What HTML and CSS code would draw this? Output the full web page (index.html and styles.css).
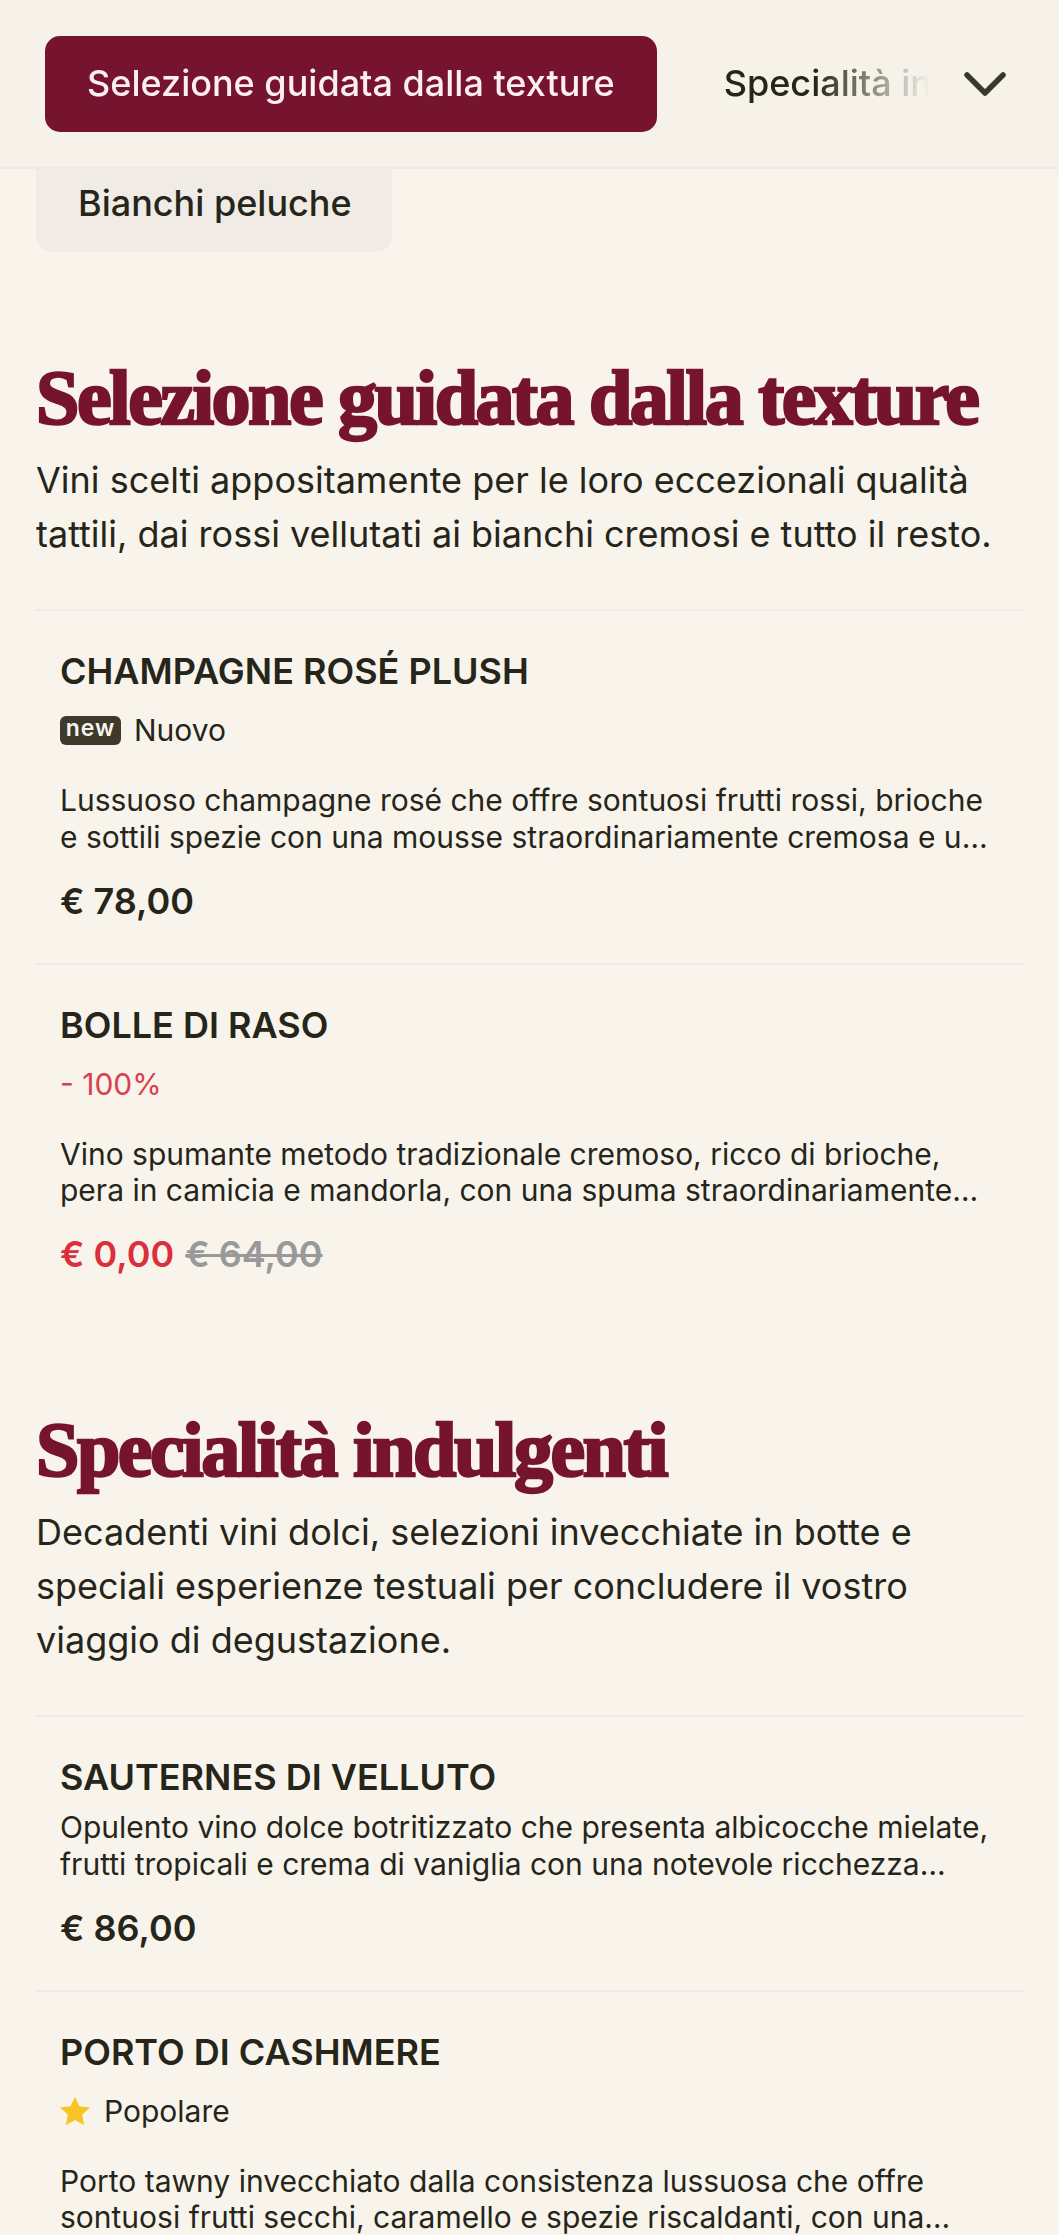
FILE: index.html
```html
<!DOCTYPE html>
<html lang="it">
<head>
<meta charset="utf-8">
<title>Menu</title>
<link rel="stylesheet" href="styles.css">
</head>
<body>
<header class="topbar">
  <nav class="tabs">
    <a class="tab tab-active">Selezione guidata dalla texture</a>
    <a class="tab">Specialità indulgenti</a>
  </nav>
  <button class="more" aria-label="Altro">
    <svg class="chevron" viewBox="0 0 44 26"><polyline points="4,4 22,22 40,4"/></svg>
  </button>
</header>
<div class="chip-strip"><span class="chip">Bianchi peluche</span></div>
<main>
  <section class="section">
    <h2 class="section-title">Selezione guidata dalla texture</h2>
    <p class="section-desc">Vini scelti appositamente per le loro eccezionali qualità tattili, dai rossi vellutati ai bianchi cremosi e tutto il resto.</p>
    <article class="item">
      <h3 class="item-title">CHAMPAGNE ROSÉ PLUSH</h3>
      <div class="meta"><span class="badge">new</span><span>Nuovo</span></div>
      <p class="item-desc">Lussuoso champagne rosé che offre sontuosi frutti rossi, brioche e sottili spezie con una mousse straordinariamente cremosa e una lunga persistenza finale in bocca.</p>
      <div class="price">€ 78,00</div>
    </article>
    <article class="item">
      <h3 class="item-title">BOLLE DI RASO</h3>
      <div class="meta meta-sale">- 100%</div>
      <p class="item-desc">Vino spumante metodo tradizionale cremoso, ricco di brioche, pera in camicia e mandorla, con una spuma straordinariamente setosa e un finale lungo e morbido.</p>
      <div class="price"><span class="price-sale">€ 0,00</span> <span class="price-old">€ 64,00</span></div>
    </article>
  </section>
  <section class="section">
    <h2 class="section-title">Specialità indulgenti</h2>
    <p class="section-desc">Decadenti vini dolci, selezioni invecchiate in botte e speciali esperienze testuali per concludere il vostro viaggio di degustazione.</p>
    <article class="item">
      <h3 class="item-title">SAUTERNES DI VELLUTO</h3>
      <p class="item-desc">Opulento vino dolce botritizzato che presenta albicocche mielate, frutti tropicali e crema di vaniglia con una notevole ricchezza vellutata e un finale persistente.</p>
      <div class="price">€ 86,00</div>
    </article>
    <article class="item">
      <h3 class="item-title">PORTO DI CASHMERE</h3>
      <div class="meta"><svg class="star" viewBox="1 1 22 22"><polygon points="12,1.5 15.2,8.6 23,9.5 17.2,14.8 18.8,22.5 12,18.6 5.2,22.5 6.8,14.8 1,9.5 8.8,8.6"/></svg><span>Popolare</span></div>
      <p class="item-desc">Porto tawny invecchiato dalla consistenza lussuosa che offre sontuosi frutti secchi, caramello e spezie riscaldanti, con una morbidezza davvero straordinaria al palato.</p>
    </article>
  </section>
</main>
</body>
</html>
```
FILE: styles.css
```css
* { box-sizing: border-box; }
html, body { margin: 0; padding: 0; }
body {
  width: 1059px;
  height: 2235px;
  overflow: hidden;
  background: #f8f4ec;
  color: #26251a;
  font-family: Inter, "Liberation Sans", sans-serif;
}
.topbar {
  height: 169px;
  display: flex;
  align-items: center;
  background: #f6f2ea;
  border-bottom: 2px solid #efeae3;
  padding: 0 45px;
}
.tabs {
  flex: 1;
  min-width: 0;
  display: flex;
  align-items: center;
  gap: 67px;
  overflow: hidden;
  white-space: nowrap;
  -webkit-mask-image: linear-gradient(to right, #000 0, #000 770px, transparent 885px);
  mask-image: linear-gradient(to right, #000 0, #000 770px, transparent 885px);
}
.tab {
  flex: none;
  font-size: 36px;
  font-weight: 500;
  line-height: 94px;
  height: 96px;
  color: #26251a;
}
.tab-active {
  background: #76142f;
  color: #fbeff0;
  border-radius: 15px;
  padding: 0 42px;
}
.more {
  flex: none;
  width: 44px;
  height: 26px;
  margin: 0 7px 0 10px;
  padding: 0;
  border: 0;
  background: none;
  display: block;
}
.chevron { display: block; width: 44px; height: 26px; fill: none; stroke: #3a3828; stroke-width: 5.5; stroke-linecap: round; stroke-linejoin: round; }
.chip-strip {
  height: 83px;
  padding-left: 36px;
  overflow: hidden;
  display: flex;
  align-items: flex-end;
}
.chip {
  flex: none;
  height: 110px;
  padding: 12px 0 0 42px;
  display: flex;
  align-items: center;
  width: 356px;
  background: #f0ebe5;
  border-radius: 16px;
  font-size: 36px;
  font-weight: 500;
  white-space: nowrap;
  color: #26251a;
}
main { padding: 0 36px; }
.section { padding-top: 106px; }
.section + .section { padding-top: 94px; }
.section-title {
  margin: 0 0 15px;
  font-family: "Liberation Serif", serif;
  font-weight: 700;
  font-size: 78px;
  line-height: 80px;
  letter-spacing: -2.5px;
  color: #76142f;
  -webkit-text-stroke: 2.5px #76142f;
}
.section-desc {
  margin: 0 0 48px;
  font-size: 36px;
  line-height: 54px;
}
.item {
  border-top: 2px solid #efeae3;
  padding: 37px 24px 37px;
}
.item-title {
  margin: 0 0 9px;
  font-size: 36px;
  line-height: 46px;
  font-weight: 600;
}
.meta {
  margin: 16px 0 32px;
  height: 40px;
  display: flex;
  align-items: center;
  font-size: 30px;
}
.meta-sale { color: #d9404f; }
.badge {
  width: 61px;
  height: 29px;
  margin-right: 13px;
  background: #3d3a2c;
  color: #f7f3ec;
  border-radius: 6px;
  font-size: 23px;
  font-weight: 600;
  letter-spacing: 1px;
  line-height: 25px;
  text-align: center;
}
.star { width: 30px; height: 30px; margin-right: 14px; fill: #f7c325; }
.item-desc {
  margin: 0 0 20.5px;
  font-size: 30px;
  line-height: 36.5px;
  display: -webkit-box;
  -webkit-line-clamp: 2;
  -webkit-box-orient: vertical;
  overflow: hidden;
}
.price {
  font-size: 36px;
  line-height: 50px;
  font-weight: 600;
}
.price-sale { color: #dc2f3c; }
.price-old { color: #999; text-decoration: line-through; margin-left: 2px; }
```
